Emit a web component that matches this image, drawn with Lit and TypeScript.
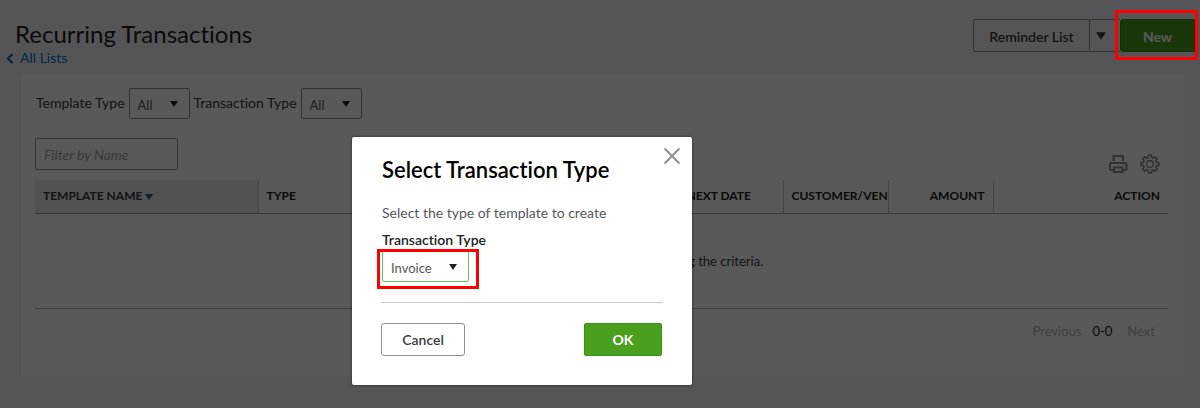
import { LitElement, html, css, svg } from "lit";
import { customElement, property, state } from "lit/decorators.js";

const caret = () => html`
  <svg class="caret" viewBox="0 0 8 6" width="8" height="6" aria-hidden="true">
    <path d="M0 0h8L4 6z" fill="currentColor" />
  </svg>
`;

@customElement("select-box")
export class SelectBox extends LitElement {
  @property() label = "";
  @property({ type: Array }) options: string[] = [];
  @property({ type: Boolean, reflect: true }) stacked = false;

  static styles = css`
    :host {
      display: flex;
      align-items: center;
      gap: 4px;
    }
    :host([stacked]) {
      flex-direction: column;
      align-items: flex-start;
      gap: 3px;
    }
    label {
      font-size: 14px;
      line-height: 18px;
      color: #393a3d;
      padding-bottom: 2px;
    }
    :host([stacked]) label {
      font-weight: 600;
      line-height: 16px;
      padding: 0;
      color: #222;
    }
    .field {
      display: grid;
      align-items: center;
    }
    select {
      grid-area: 1 / 1;
      appearance: none;
      box-sizing: border-box;
      height: 31px;
      width: 61px;
      margin: 0;
      padding: 2px 24px 0 8px;
      border: 1px solid #8d9096;
      border-radius: 2px;
      background: transparent;
      color: #55575b;
      font: inherit;
      font-size: 13px;
      outline: none;
    }
    :host([stacked]) select {
      width: 87px;
      border-color: #6cbd5c;
      background: #fff;
    }
    .caret {
      grid-area: 1 / 1;
      justify-self: end;
      margin-right: 12px;
      color: #222;
      pointer-events: none;
    }
  `;

  render() {
    return html`
      <label for="control">${this.label}</label>
      <div class="field">
        <select id="control">
          ${this.options.map((o) => html`<option>${o}</option>`)}
        </select>
        ${caret()}
      </div>
    `;
  }
}

@customElement("app-root")
export class AppRoot extends LitElement {
  @state() private columns = [
    { title: "Template Name", cls: "name" },
    { title: "Type", cls: "" },
    { title: "Txn Type", cls: "" },
    { title: "Interval", cls: "" },
    { title: "Previous Date", cls: "" },
    { title: "Next Date", cls: "" },
    { title: "Customer/Vendor", cls: "" },
    { title: "Amount", cls: "right" },
    { title: "Action", cls: "last right" },
  ];

  static styles = css`
    :host {
      display: block;
      font-family: Lato, "Open Sans", sans-serif;
      font-size: 14px;
      line-height: 18px;
      font-variant-ligatures: none;
      color: #393a3d;
    }
    * {
      box-sizing: border-box;
    }
    button {
      font: inherit;
      font-weight: 600;
      cursor: pointer;
    }
    .page {
      position: relative;
      min-height: 100vh;
      background: #f4f4f8;
      padding-bottom: 32px;
    }
    .top {
      display: flex;
      justify-content: space-between;
      align-items: flex-start;
      padding: 19px 5px 0 6px;
      height: 74px;
    }
    h1 {
      margin: 0;
      padding-left: 9px;
      font-weight: 400;
      font-size: 24px;
      line-height: 30px;
      color: #222;
    }
    .back {
      display: flex;
      align-items: center;
      gap: 6px;
      color: #0077c5;
      text-decoration: none;
    }
    .actions {
      display: flex;
    }
    .plain {
      height: 33px;
      border: 1px solid #8d9096;
      background: transparent;
      color: #393a3d;
      padding: 2px 14px 0;
    }
    .reminder {
      width: 117px;
      padding: 2px 0 0;
      border-radius: 2px 0 0 2px;
    }
    .more {
      width: 30px;
      padding: 0 0 0 5px;
      border-width: 1px 0;
      text-align: left;
    }
    .more svg {
      width: 10px;
      height: 8px;
      margin: 1px;
    }
    .green {
      height: 33px;
      border: 1px solid #38930f;
      border-radius: 2px;
      background: #4a9f1e;
      color: #fff;
      font-weight: 700;
    }
    .new {
      width: 75px;
      padding: 2px 0 0;
      border-radius: 3px 0 0 3px;
    }
    .card {
      margin: 0 16px 0 21px;
      padding: 14px 16px 36px 14px;
      background: #fff;
    }
    .filters {
      display: flex;
      gap: 4px;
      padding-left: 1px;
    }
    .tools {
      display: flex;
      justify-content: space-between;
      align-items: flex-end;
      padding: 19px 8px 10px 0;
    }
    .search {
      width: 143px;
      height: 32px;
      padding: 0 8px;
      border: 1px solid #8d9096;
      border-radius: 2px;
      background: transparent;
      font: inherit;
      font-style: italic;
    }
    .search::placeholder {
      color: #a0a3a8;
      opacity: 1;
    }
    .icons {
      display: flex;
      gap: 12px;
      color: #8d9096;
      margin-bottom: -4px;
    }
    .icon {
      display: block;
      padding: 0;
      border: 0;
      background: none;
      color: inherit;
      height: 20px;
    }
    table {
      width: 100%;
      border-collapse: collapse;
      table-layout: fixed;
    }
    th {
      width: 105px;
      height: 33px;
      padding: 0 0 0 8px;
      border-bottom: 1px solid #9da1a8;
      border-right: 1px solid #c3c6cc;
      overflow: hidden;
      white-space: nowrap;
      text-align: left;
      text-transform: uppercase;
      font-size: 12px;
      line-height: 16px;
      color: #222;
    }
    th.name {
      width: 223px;
      background: #ebebf0;
      color: #393a3d;
    }
    th.last {
      width: auto;
      border-right: 0;
    }
    th.right {
      text-align: right;
      padding-right: 8px;
    }
    th .caret {
      color: #25597d;
    }
    .empty {
      height: 95px;
      padding: 0;
      border-bottom: 1px solid #b5b8bd;
      text-align: center;
      font-size: 13px;
    }
    .pager {
      display: flex;
      justify-content: flex-end;
      gap: 11px;
      padding: 13px 13px 0 0;
      font-size: 13px;
    }
    .pager button {
      padding: 0;
      border: 0;
      background: none;
      font-weight: 400;
      color: #b4b6ba;
    }
    .pager span {
      color: #222;
      padding-right: 4px;
    }
    .overlay {
      position: absolute;
      inset: 0;
      background: rgba(0, 0, 0, 0.65);
    }
    .marker {
      position: absolute;
      border: 3px solid #f00;
      pointer-events: none;
    }
    .marker.on-new {
      top: 10px;
      right: 2px;
      width: 83px;
      height: 50px;
    }
    .marker.on-select {
      inset: 17px -9px -7px -5px;
    }
    .dialog {
      position: absolute;
      top: 137px;
      left: 352px;
      width: 340px;
      padding: 18px 29px 29px;
      border-radius: 2px;
      background: #fff;
      box-shadow: 0 0 3px rgba(0, 0, 0, 0.6);
    }
    .close {
      position: absolute;
      top: 10px;
      right: 11px;
      padding: 0;
      border: 0;
      background: none;
      color: #8d9096;
      height: 18px;
      line-height: 0;
    }
    h2 {
      margin: 0;
      padding-left: 1px;
      font-size: 22px;
      line-height: 30px;
      font-weight: 600;
      color: #000;
    }
    .intro {
      margin: 19px 0 10px;
      padding-left: 1px;
      color: #55575b;
    }
    .type-holder {
      position: relative;
      width: 88px;
      margin-left: 1px;
      white-space: nowrap;
    }
    .buttons {
      display: flex;
      justify-content: space-between;
      margin-top: 20px;
      padding: 20px 1px 0 0;
      border-top: 1px solid #c7c8ca;
    }
    .cancel {
      width: 84px;
      border-radius: 3px;
      padding: 0;
    }
    .ok {
      width: 78px;
      padding: 0;
    }
  `;

  private gear() {
    const teeth = 8;
    const pts: string[] = [];
    for (let i = 0; i < teeth; i++) {
      const c = (i / teeth) * Math.PI * 2;
      for (const [d, r] of [[-0.24, 6.8], [-0.16, 9], [0.16, 9], [0.24, 6.8]]) {
        pts.push(`${(10 + r * Math.sin(c + d)).toFixed(2)} ${(10 - r * Math.cos(c + d)).toFixed(2)}`);
      }
    }
    return svg`<path d="M${pts.join("L")}Z" /><circle cx="10" cy="10" r="3.4" />`;
  }

  render() {
    return html`
      <div class="page">
        <header class="top">
          <div>
            <h1>Recurring Transactions</h1>
            <a class="back" href="#lists">
              <svg width="8" height="11" viewBox="0 0 8 11" fill="none" stroke="#0a5bb0" stroke-width="2" aria-hidden="true">
                <path d="M6.5 1 2 5.5 6.5 10" />
              </svg>
              All Lists
            </a>
          </div>
          <div class="actions">
            <button class="plain reminder">Reminder List</button>
            <button class="plain more" aria-label="More">${caret()}</button>
            <button class="green new">New</button>
          </div>
        </header>

        <main class="card">
          <div class="filters">
            <select-box label="Template Type" .options=${["All"]}></select-box>
            <select-box label="Transaction Type" .options=${["All"]}></select-box>
          </div>
          <div class="tools">
            <input class="search" type="text" placeholder="Filter by Name" aria-label="Filter by Name" />
            <div class="icons">
              <button class="icon" aria-label="Print">
                <svg width="20" height="20" viewBox="0 0 20 20" fill="none" stroke="currentColor" stroke-width="2">
                  <path d="M5.5 7V2h9.5v5" />
                  <path d="M5 16H3.5Q2 16 2 14.5v-4Q2 9 3.5 9h13.5q1.5 0 1.5 1.5v4q0 1.5-1.5 1.5H15" />
                  <path d="M6 13.5h8.5V18H6z" />
                </svg>
              </button>
              <button class="icon" aria-label="Settings">
                <svg width="20" height="20" viewBox="0 0 20 20" fill="none" stroke="currentColor" stroke-width="1.6" stroke-linejoin="round">
                  ${this.gear()}
                </svg>
              </button>
            </div>
          </div>
          <table>
            <thead>
              <tr>
                ${this.columns.map(
                  (c) => html`<th class=${c.cls}>${c.title} ${c.cls === "name" ? caret() : ""}</th>`
                )}
              </tr>
            </thead>
            <tbody>
              <tr>
                <td class="empty" colspan="9">There are no recurring transactions matching the criteria.</td>
              </tr>
            </tbody>
          </table>
          <nav class="pager">
            <button>Previous</button>
            <span>0-0</span>
            <button>Next</button>
          </nav>
        </main>

        <div class="overlay"></div>
        <div class="marker on-new"></div>

        <section class="dialog" role="dialog" aria-labelledby="dialog-title">
          <button class="close" aria-label="Close">
            <svg width="18" height="18" viewBox="0 0 18 18" fill="none" stroke="currentColor" stroke-width="2">
              <path d="M1.5 1.5l15 15M16.5 1.5l-15 15" />
            </svg>
          </button>
          <h2 id="dialog-title">Select Transaction Type</h2>
          <p class="intro">Select the type of template to create</p>
          <div class="type-holder">
            <select-box stacked label="Transaction Type" .options=${["Invoice"]}></select-box>
            <div class="marker on-select"></div>
          </div>
          <div class="buttons">
            <button class="plain cancel">Cancel</button>
            <button class="green ok">OK</button>
          </div>
        </section>
      </div>
    `;
  }
}
